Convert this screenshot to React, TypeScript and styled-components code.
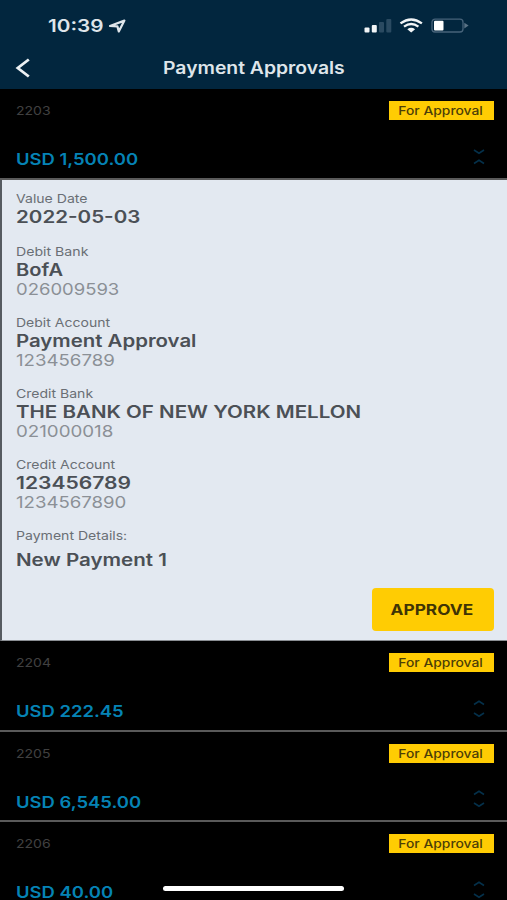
import React from 'react';
import styled, { createGlobalStyle } from 'styled-components';

const GlobalStyle = createGlobalStyle`
  * { box-sizing: border-box; }
  body { margin: 0; background: #000; overflow: hidden; }
`;

const Screen = styled.main`
  position: relative;
  width: 100%;
  height: 904px;
  background: #000;
  font-family: Inter, "Liberation Sans", sans-serif;
`;

const Header = styled.header`
  height: 89px;
  background: #02263e;
  color: #dfe5ea;
`;

const StatusBar = styled.div`
  display: flex;
  align-items: center;
  height: 48px;
  padding: 4px 38px 0 48px;
`;

const StatusIcons = styled.div`
  display: flex;
  align-items: center;
  margin-left: auto;
`;

const NavBar = styled.div`
  display: grid;
  grid-template-columns: 60px 1fr 60px;
  align-items: center;
  height: 40px;
`;

const BackButton = styled.button`
  display: flex;
  padding: 0 0 0 14px;
  border: 0;
  background: none;
  color: inherit;
`;

const Wide = styled.span<{ $x: number; $origin?: string }>`
  display: inline-block;
  white-space: nowrap;
  transform: scaleX(${(p) => p.$x});
  transform-origin: ${(p) => p.$origin ?? 'left'} center;
`;

const Clock = styled.div`
  width: 60px;
  font-size: 17px;
  font-weight: 600;
  line-height: 22px;
`;

const Title = styled.h1`
  margin: 0;
  text-align: center;
  font-size: 17px;
  font-weight: 600;
  line-height: 22px;
`;

const PaymentRow = styled.section<{ $open?: boolean }>`
  display: flex;
  flex-direction: column;
  height: ${(p) => (p.$open ? 91 : 90.6)}px;
  padding: 12px 13px 0 16px;
  border-bottom: 2px solid #5a5a5a;
`;

const RowLine = styled.div<{ $gap?: number }>`
  display: flex;
  justify-content: space-between;
  align-items: center;
  margin-top: ${(p) => p.$gap ?? 0}px;
`;

const Reference = styled.span`
  font-size: 12px;
  line-height: 19px;
  color: #404040;
`;

const Badge = styled.span`
  width: 105px;
  height: 19px;
  padding-right: 1px;
  background: #ffcc03;
  color: #4c3e08;
  text-align: center;
  font-size: 12px;
  font-weight: 500;
  line-height: 19px;
`;

const Amount = styled.span`
  font-size: 16px;
  font-weight: 600;
  line-height: 20px;
  color: #0583b5;
`;

const Toggle = styled.svg`
  margin: -5px 9px 0 0;
`;

const Details = styled.section`
  display: flex;
  flex-direction: column;
  gap: 17px;
  height: 461px;
  padding: 12.4px 13px 0 14px;
  border-left: 2px solid #565b61;
  border-bottom: 1px solid #8a8e93;
  background: #e3e9f1;
`;

const Field = styled.div`
  display: flex;
  flex-direction: column;
  align-items: flex-start;
`;

const Label = styled.span`
  font-size: 12px;
  line-height: 14px;
  color: #6a6f75;
`;

const Value = styled.span<{ $top?: number }>`
  margin-top: ${(p) => p.$top ?? 0}px;
  font-size: 17px;
  font-weight: 600;
  line-height: 22px;
  color: #4b5056;
`;

const Code = styled.span`
  padding-bottom: 2px;
  font-size: 16px;
  line-height: 16px;
  color: #8b9096;
`;

const ApproveButton = styled.button`
  align-self: flex-end;
  width: 122px;
  height: 43px;
  padding: 0 2px 0 0;
  border: 0;
  border-radius: 4px;
  background: #ffcc03;
  color: #3f3405;
  font-family: inherit;
  font-size: 15px;
  font-weight: 700;
  line-height: 43px;
`;

const HomeIndicator = styled.div`
  position: absolute;
  left: 163px;
  top: 886px;
  width: 181px;
  height: 5px;
  border-radius: 3px;
  background: #fff;
`;

interface Payment {
  id: string;
  amount: string;
  open?: boolean;
}

interface Detail {
  label: string;
  lx: number;
  value: string;
  vx: number;
  code?: string;
  cx?: number;
  top?: number;
}

const payments: Payment[] = [
  { id: '2203', amount: 'USD 1,500.00', open: true },
  { id: '2204', amount: 'USD 222.45' },
  { id: '2205', amount: 'USD 6,545.00' },
  { id: '2206', amount: 'USD 40.00' },
];

const details: Detail[] = [
  { label: 'Value Date', lx: 1.172, value: '2022-05-03', vx: 1.21 },
  { label: 'Debit Bank', lx: 1.178, value: 'BofA', vx: 1.18, code: '026009593', cx: 1.155 },
  { label: 'Debit Account', lx: 1.168, value: 'Payment Approval', vx: 1.2, code: '123456789', cx: 1.165 },
  { label: 'Credit Bank', lx: 1.17, value: 'THE BANK OF NEW YORK MELLON', vx: 1.207, code: '021000018', cx: 1.17 },
  { label: 'Credit Account', lx: 1.168, value: '123456789', vx: 1.24, code: '1234567890', cx: 1.163 },
  { label: 'Payment Details:', lx: 1.172, value: 'New Payment 1', vx: 1.21, top: 6 },
];

function PaymentItem({ id, amount, open }: Payment) {
  return (
    <PaymentRow $open={open}>
      <RowLine>
        <Reference><Wide $x={1.17}>{id}</Wide></Reference>
        <Badge><Wide $x={1.155} $origin="center">For Approval</Wide></Badge>
      </RowLine>
      <RowLine $gap={29}>
        <Amount><Wide $x={1.152}>{amount}</Wide></Amount>
        <Toggle width="12" height="18" viewBox="0 0 12 18" fill="none" stroke="#04304a" strokeWidth="1.6">
          {open ? <path d="M1 2 6 5.2 11 2M1 15.5 6 12.3 11 15.5" /> : <path d="M1 4.5 6 1.3 11 4.5M1 13 6 16.2 11 13" />}
        </Toggle>
      </RowLine>
    </PaymentRow>
  );
}

export default function App() {
  return (
    <Screen>
      <GlobalStyle />
      <Header>
        <StatusBar>
          <Clock><Wide $x={1.22}>10:39</Wide></Clock>
          <svg width="19" height="15" viewBox="0 0 19 15" fill="none" stroke="#dfe5ea" strokeWidth="2.2" strokeLinejoin="round">
            <path d="M2 7 16.4 1.6 10.8 12.4 9.4 7.4Z" />
          </svg>
          <StatusIcons>
            <svg width="105" height="16" viewBox="0 0 105 16" fill="none">
              <rect x="0.5" y="9.5" width="5" height="5" rx="1" fill="#f2f5f7" />
              <rect x="7.8" y="7" width="5" height="7.5" rx="1" fill="#f2f5f7" />
              <rect x="15" y="4" width="5" height="10.5" rx="1" fill="#2a4a61" />
              <rect x="22.3" y="1" width="5" height="13.5" rx="1" fill="#2a4a61" />
              <path d="M36.5 5.4Q47.2 -2.6 57.9 5.4" stroke="#f2f5f7" strokeWidth="2.4" />
              <path d="M40 8.7Q47.2 3.3 54.4 8.7" stroke="#f2f5f7" strokeWidth="2.3" />
              <path d="M43.3 11.2Q47.2 8.3 51.1 11.2L47.2 14.4Z" fill="#f2f5f7" />
              <rect x="68" y="1.2" width="31" height="12.8" rx="3" stroke="#47637a" strokeWidth="1.3" />
              <rect x="70" y="2.8" width="9.5" height="9.6" rx="1" fill="#fff" />
              <path d="M100.3 4.8 104.6 7.6 100.3 10.4Z" fill="#5a7386" />
            </svg>
          </StatusIcons>
        </StatusBar>
        <NavBar>
          <BackButton aria-label="Back">
            <svg width="18" height="20" viewBox="0 0 18 20" fill="none" stroke="#edf1f4" strokeWidth="2.8">
              <path d="M14.8 1.5 3.8 10 14.8 18.5" />
            </svg>
          </BackButton>
          <Title><Wide $x={1.137} $origin="center">Payment Approvals</Wide></Title>
        </NavBar>
      </Header>
      {payments.map((p) => (
        <React.Fragment key={p.id}>
          <PaymentItem {...p} />
          {p.open && (
            <Details>
              {details.map((d) => (
                <Field key={d.label}>
                  <Label><Wide $x={d.lx}>{d.label}</Wide></Label>
                  <Value $top={d.top}><Wide $x={d.vx}>{d.value}</Wide></Value>
                  {d.code && <Code><Wide $x={d.cx ?? 1.16}>{d.code}</Wide></Code>}
                </Field>
              ))}
              <ApproveButton><Wide $x={1.15} $origin="center">APPROVE</Wide></ApproveButton>
            </Details>
          )}
        </React.Fragment>
      ))}
      <HomeIndicator />
    </Screen>
  );
}
